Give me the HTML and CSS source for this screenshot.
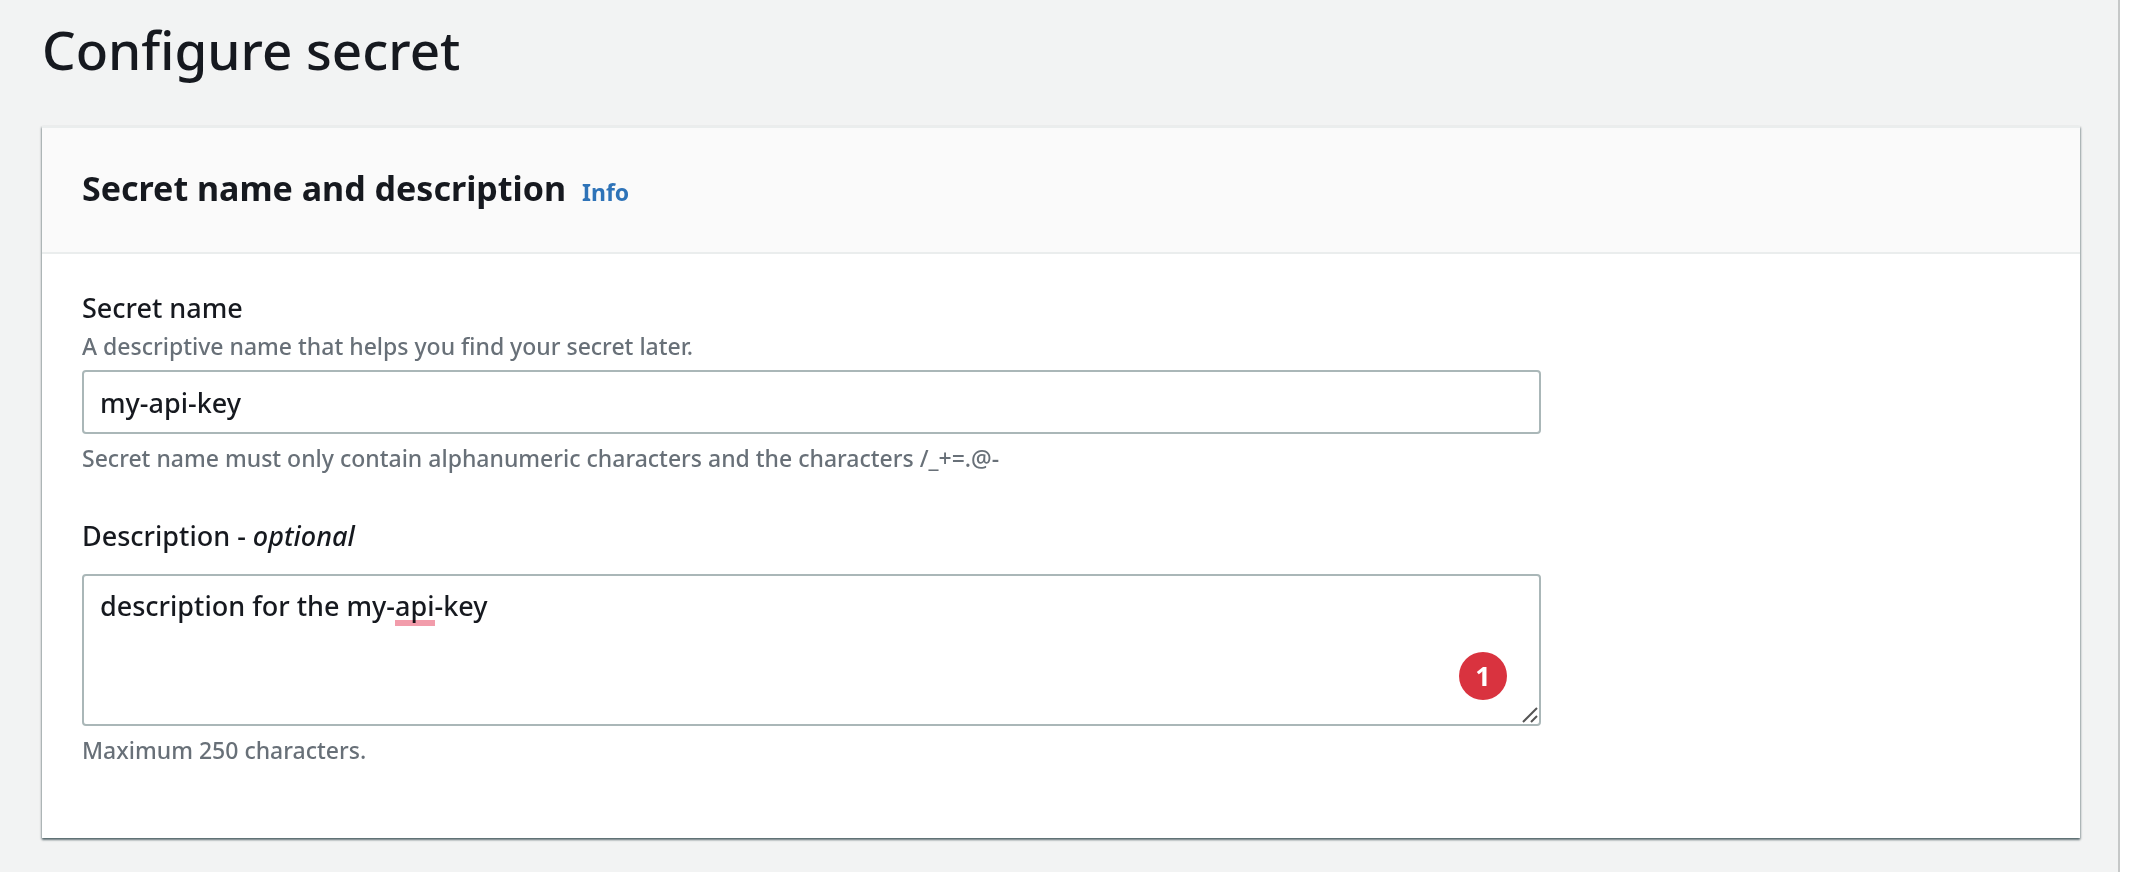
FILE: index.html
```
<!DOCTYPE html>
<html lang="en">

<head>
    <meta charset="UTF-8">
    <meta name="viewport" content="width=device-width, initial-scale=1.0">
    <title>Configure secret</title>
    <link rel="stylesheet" href="styles.css">
</head>

<body>
    <main class="page">
        <h1 class="page-title">Configure secret</h1>

        <section class="card">
            <div class="card-header">
                <h2 class="card-title">Secret name and description</h2>
                <a class="info-link" href="#">Info</a>
            </div>

            <form class="card-body">
                <div class="field">
                    <label class="label" for="secretName">Secret name</label>
                    <div class="hint" id="secretNameHint">A descriptive name that helps you find your secret later.</div>
                    <input class="control" type="text" id="secretName" value="my-api-key" aria-describedby="secretNameHint">
                    <div class="hint constraint">Secret name must only contain alphanumeric characters and the characters /_+=.@-</div>
                </div>

                <div class="field">
                    <label class="label" for="description">Description - <em>optional</em></label>
                    <div class="textarea-wrap">
                        <textarea class="control" id="description" spellcheck="false">description for the my-api-key</textarea>
                        <span class="spelling-mark"></span>
                        <span class="badge">1</span>
                        <svg class="grip" viewBox="0 0 16 16" aria-hidden="true">
                            <path d="M1 15 L15 1 M9 15 L15 9" />
                        </svg>
                    </div>
                    <div class="hint constraint">Maximum 250 characters.</div>
                </div>
            </form>
        </section>
    </main>
</body>

</html>
```

FILE: styles.css
```
* {
    box-sizing: border-box;
}

body {
    margin: 0;
    background: #fff;
    color: #16191f;
    font-family: 'Noto Sans', 'Open Sans', sans-serif;
    font-size: 27px;
    font-weight: 500;
}

.page {
    min-height: 100vh;
    margin-right: 14px;
    padding: 14px 38px 34px 42px;
    background: #f2f3f3;
    border-right: 2px solid #c6c8c8;
}

.page-title {
    margin: 0 0 40px;
    font-size: 53px;
    font-weight: 500;
    line-height: 72px;
}

.card {
    background: #fff;
    border-top: 2px solid #eaeded;
    box-shadow: 0 2px 2px 0 rgba(0, 28, 36, 0.5), 1px 1px 2px 0 rgba(0, 28, 36, 0.2), -1px 1px 2px 0 rgba(0, 28, 36, 0.2);
}

.card-header {
    display: flex;
    align-items: baseline;
    gap: 16px;
    padding: 36px 40px 40px;
    background: #fafafa;
    border-bottom: 2px solid #eaeded;
}

.card-title {
    margin: 0;
    font-size: 34px;
    font-weight: 700;
    line-height: 48px;
}

.info-link {
    color: #2e73b8;
    font-size: 23px;
    font-weight: 700;
    text-decoration: none;
}

.info-link:hover {
    text-decoration: underline;
}

.card-body {
    padding: 34px 40px 70px;
}

.field {
    max-width: 1459px;
}

.field + .field {
    margin-top: 40px;
}

.label {
    display: block;
    line-height: 40px;
}

.hint {
    margin-bottom: 6px;
    color: #687078;
    font-size: 23px;
    line-height: 36px;
}

.constraint {
    margin: 6px 0 0;
}

.control {
    display: block;
    width: 100%;
    height: 64px;
    padding: 12px 16px;
    border: 2px solid #aab7b8;
    border-radius: 4px;
    background: #fff;
    color: inherit;
    font: inherit;
    line-height: 36px;
}

.control:focus {
    outline: none;
    border-color: #00a1c9;
}

.textarea-wrap {
    position: relative;
    margin-top: 18px;
}

textarea.control {
    height: 152px;
    resize: none;
}

/* underline for the misspelled word, sits under the letters */
.spelling-mark {
    position: absolute;
    top: 46px;
    left: 313px;
    width: 40px;
    height: 6px;
    background: #f29cab;
    mix-blend-mode: multiply;
    pointer-events: none;
}

.badge {
    position: absolute;
    right: 34px;
    bottom: 26px;
    width: 48px;
    height: 48px;
    border-radius: 50%;
    background: #d9333f;
    color: #fff;
    font-weight: 700;
    line-height: 48px;
    text-align: center;
}

.grip {
    position: absolute;
    right: 3px;
    bottom: 3px;
    width: 16px;
    height: 16px;
    fill: none;
    stroke: #555;
    stroke-width: 2;
}
```
